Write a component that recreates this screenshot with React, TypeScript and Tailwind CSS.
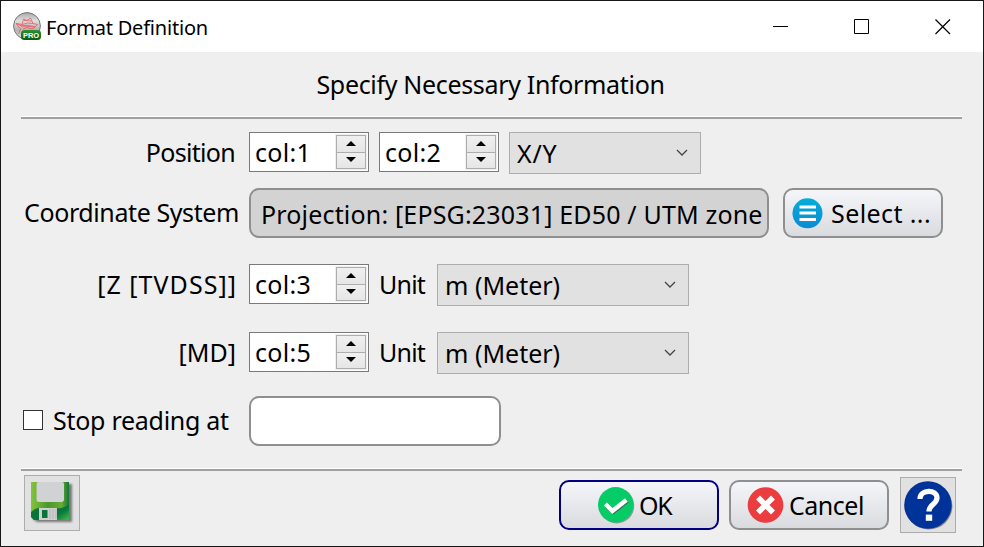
import type { ReactNode } from "react";

function Rule() {
  return (
    <div className="mr-[21px] ml-5 h-[3px] shrink-0 border-t border-white bg-[#a0a0a0]" />
  );
}

function Label({ children, className = "" }: { children: ReactNode; className?: string }) {
  return (
    <span className={`block leading-[34px] whitespace-pre ${className}`}>{children}</span>
  );
}

function SpinBox({ value }: { value: string }) {
  return (
    <div className="flex h-10 w-[120px] shrink-0 justify-between border border-[#7a7a7a] bg-white pl-[5px]">
      <Label className="mt-[2px] tracking-[0.3px]">{value}</Label>
      <div className="my-px mr-px flex w-8 flex-col border border-[#f0f0f0]">
        <div className="flex h-[18px] items-center justify-center border border-[#adadad] bg-gradient-to-b from-[#f0f0f0] to-[#e6e6e6]">
          <svg width="10" height="5" viewBox="0 0 10 5" className="-mt-[2px] -ml-px">
            <path d="M5 0L10 5H0Z" fill="#000" />
          </svg>
        </div>
        <div className="flex h-[16px] items-center justify-center border border-t-0 border-[#adadad] bg-gradient-to-b from-[#f0f0f0] to-[#e6e6e6]">
          <svg width="10" height="5" viewBox="0 0 10 5" className="-mt-[3px] -ml-px">
            <path d="M0 0H10L5 5Z" fill="#000" />
          </svg>
        </div>
      </div>
    </div>
  );
}

function Combo({ value, className }: { value: string; className: string }) {
  return (
    <div className={`flex h-[42px] shrink-0 justify-between border border-[#adadad] bg-[#e1e1e1] pr-3 pl-[7px] ${className}`}>
      <Label className="mt-[3px]">{value}</Label>
      <svg width="12" height="8" viewBox="0 0 12 8" className="mt-4" fill="none" stroke="#444" strokeWidth="1.3">
        <path d="M1 1L6 6L11 1" />
      </svg>
    </div>
  );
}

function PushButton({ icon, children, className = "" }: { icon: ReactNode; children: ReactNode; className?: string }) {
  return (
    <button className={`flex h-[50px] w-40 shrink-0 items-center rounded-[10px] border-2 bg-gradient-to-b from-[#f5f6fa] to-[#dadbde] ${className}`}>
      {icon}
      {children}
    </button>
  );
}

function AppIcon() {
  return (
    <svg width="29" height="29" viewBox="0 0 29 29" className="shrink-0">
      <defs>
        <linearGradient id="orb" x1="0" y1="0" x2="0" y2="1">
          <stop offset="0" stopColor="#a8a8a8" />
          <stop offset="0.3" stopColor="#dedede" />
          <stop offset="0.65" stopColor="#b4b4b4" />
          <stop offset="1" stopColor="#e4e4e4" />
        </linearGradient>
        <linearGradient id="pro" x1="0" y1="0" x2="0" y2="1">
          <stop offset="0" stopColor="#2d9135" />
          <stop offset="1" stopColor="#075c16" />
        </linearGradient>
      </defs>
      <circle cx="14" cy="14" r="13.4" fill="url(#orb)" stroke="#777" strokeWidth="1" />
      <g fill="none" stroke="#ec5a5e" strokeWidth="0.8">
        <path d="M3 11.5L9 12.5L10.5 7L14 8.5L17.5 6L20 11.5L24.5 12.5L22 15L9 14L3 11.5L7.5 17L5.5 22" />
        <path d="M9 12.5Q15 10 20 11.5M8 14Q15 12 22 15M10 17L14 15.5L19 17L22 15.5M11 8.5L18.5 9" />
      </g>
      <rect x="8" y="18" width="20" height="10" rx="3.5" fill="url(#pro)" />
      <text x="18.1" y="25.6" textAnchor="middle" fontFamily="Liberation Sans" fontWeight="700" fontSize="7.5" fill="#fff" textLength="16">PRO</text>
    </svg>
  );
}

function ListIcon() {
  return (
    <svg width="32" height="32" viewBox="0 0 32 32" className="shrink-0">
      <defs>
        <linearGradient id="list" x1="0" y1="0" x2="0" y2="1">
          <stop offset="0" stopColor="#05add9" />
          <stop offset="1" stopColor="#0a8bd4" />
        </linearGradient>
      </defs>
      <circle cx="16.5" cy="16.3" r="15" fill="url(#list)" />
      <path d="M8.5 10H25M8.5 16H25M8.5 22.5H25" stroke="#fff" strokeWidth="3" />
    </svg>
  );
}

function CheckIcon() {
  return (
    <svg width="38" height="38" viewBox="0 0 38 38" className="shrink-0">
      <circle cx="19.7" cy="19.8" r="17.6" fill="#999" />
      <circle cx="18.7" cy="18.8" r="17.7" fill="#05cc66" />
      <path d="M9.4 20L16.4 26L30.4 15" fill="none" stroke="#3c6b50" strokeWidth="4" />
      <path d="M8.4 18L15.4 25L29.4 14" fill="none" stroke="#fff" strokeWidth="4.4" />
    </svg>
  );
}

function CrossIcon() {
  return (
    <svg width="38" height="38" viewBox="0 0 38 38" className="shrink-0">
      <circle cx="18.5" cy="19" r="17.8" fill="#eb3c3f" />
      <path d="M11 11.5L26 26.5M26 11.5L11 26.5" fill="none" stroke="#fff" strokeWidth="5.6" />
    </svg>
  );
}

function HelpIcon() {
  return (
    <svg width="50" height="50" viewBox="0 0 50 50">
      <circle cx="25.8" cy="26" r="23.6" fill="#888" />
      <circle cx="24.9" cy="25" r="23.7" fill="#003399" />
      <path d="M17 19C17 9 34 9 34 17.8C34 24.5 26 24 26 31.5" fill="none" stroke="#fff" strokeWidth="5.2" />
      <rect x="22.8" y="34.6" width="6.4" height="6.2" fill="#fff" />
    </svg>
  );
}

function SaveIcon() {
  return (
    <svg width="44" height="44" viewBox="0 0 44 44" className="-mt-[2px]">
      <defs>
        <linearGradient id="disk" x1="0" y1="0" x2="1" y2="0">
          <stop offset="0" stopColor="#84c43c" />
          <stop offset="0.45" stopColor="#4b962d" />
          <stop offset="0.8" stopColor="#66ad32" />
          <stop offset="1" stopColor="#147537" />
        </linearGradient>
        <linearGradient id="base" x1="0" y1="0" x2="1" y2="1">
          <stop offset="0" stopColor="#4fa334" />
          <stop offset="0.4" stopColor="#087239" />
          <stop offset="0.75" stopColor="#08783b" />
          <stop offset="1" stopColor="#42be4b" />
        </linearGradient>
        <filter id="soft" x="-20%" y="-20%" width="140%" height="140%">
          <feGaussianBlur stdDeviation="1" />
        </filter>
      </defs>
      <path d="M3 4H42V42H7L3 39Z" fill="#777" filter="url(#soft)" />
      <path d="M1 2H39V40H4L1 37Z" fill="url(#disk)" />
      <path d="M1 29Q6 22 16 23Q29 23 36 15L39 28V40H4L1 37Z" fill="url(#base)" />
      <path d="M6 22H34V16L39 11V24Q34 29 26 28H9Q5 28 1 32V28Q2 24 6 22Z" fill="url(#disk)" />
      <rect x="6.5" y="2" width="27.5" height="20" rx="2" fill="#d1d2d4" />
      <rect x="9" y="28" width="18" height="12" fill="#ced0d0" />
      <rect x="12" y="30" width="5.5" height="8" fill="#08743a" />
      <path d="M20 29V39M23 29V39M26 29V39" stroke="#aab0ad" strokeWidth="0.8" />
    </svg>
  );
}

export default function App() {
  return (
    <div className="flex h-[547px] w-[984px] flex-col overflow-hidden border border-[#171717] bg-[#efefef] font-['Noto_Sans',sans-serif] text-[25px] text-black">
      <header className="flex h-[51px] shrink-0 items-center bg-white pl-3">
        <AppIcon />
        <span className="ml-1 pt-[2px] text-[20px] tracking-[-0.2px] whitespace-pre">Format Definition</span>
        <div className="mr-[32px] ml-auto flex items-center gap-[65px]">
          <svg width="16" height="16" viewBox="0 0 16 16" className="-ml-px"><path d="M0 7.5H15" stroke="#000" /></svg>
          <svg width="16" height="16" viewBox="0 0 16 16"><path d="M0.5 0.5H14.5V14.5H0.5Z" fill="none" stroke="#000" /></svg>
          <svg width="16" height="16" viewBox="0 0 16 16"><path d="M0.5 0.5L15 15M15 0.5L0.5 15" stroke="#000" strokeWidth="1.2" /></svg>
        </div>
      </header>

      <div className="flex h-16 shrink-0 justify-center pt-[15px] pr-[3px]">
        <Label className="tracking-[-0.33px]">Specify Necessary Information</Label>
      </div>
      <Rule />

      <main className="flex h-[349px] shrink-0 flex-col pt-[13px]">
        <div className="flex h-14">
          <div className="mr-[14px] flex w-[234px] justify-end pt-[3px]">
            <Label className="tracking-[-0.7px]">Position</Label>
          </div>
          <SpinBox value="col:1" />
          <div className="w-[10px]" />
          <SpinBox value="col:2" />
          <div className="w-[10px]" />
          <Combo value="X/Y" className="w-48 tracking-[0.8px]" />
        </div>
        <div className="flex h-[76px]">
          <div className="mr-[10px] flex w-[238px] justify-end pt-[7px]">
            <Label className="tracking-[-0.4px]">Coordinate System</Label>
          </div>
          <div className="h-[50px] w-[520px] shrink-0 rounded-[10px] border-2 border-[#8f8f8f] bg-[#d3d3d3] pt-[7px] pl-[10px]">
            <Label className="tracking-[0.17px]">Projection: [EPSG:23031] ED50 / UTM zone</Label>
          </div>
          <PushButton icon={<ListIcon />} className="ml-[14px] border-[#8f8f8f] pl-[6px]">
            <Label className="ml-[8px] tracking-[0.4px]">Select ...</Label>
          </PushButton>
        </div>
        <div className="flex h-[68px]">
          <div className="mr-[12px] flex w-[236px] justify-end pt-[3px]">
            <Label className="tracking-[1.05px]">[Z [TVDSS]]</Label>
          </div>
          <SpinBox value="col:3" />
          <Label className="w-[68px] pt-[3px] pl-[10px] tracking-[-0.8px]">Unit</Label>
          <Combo value="m (Meter)" className="w-[252px]" />
        </div>
        <div className="flex h-16">
          <div className="mr-[13px] flex w-[235px] justify-end pt-[3px]">
            <Label>[MD]</Label>
          </div>
          <SpinBox value="col:5" />
          <Label className="w-[68px] pt-[3px] pl-[10px] tracking-[-0.8px]">Unit</Label>
          <Combo value="m (Meter)" className="w-[252px]" />
        </div>
        <div className="flex">
          <div className="flex w-[248px] pl-[22px]">
            <div className="mt-[14px] size-5 border border-[#333] bg-white" />
            <Label className="mt-[7px] ml-[10px] tracking-[-0.27px]">Stop reading at</Label>
          </div>
          <div className="h-[50px] w-[252px] rounded-[10px] border-2 border-[#8f8f8f] bg-white" />
        </div>
      </main>
      <Rule />

      <footer className="flex pr-[27px] pl-[23px]">
        <div className="mt-1 flex size-14 items-center justify-center border border-[#adadad] bg-[#e1e1e1]">
          <SaveIcon />
        </div>
        <PushButton icon={<CheckIcon />} className="mt-[9px] ml-auto border-[#000080] pl-[36px]">
          <Label className="ml-[4px] tracking-[-1.2px]">OK</Label>
        </PushButton>
        <PushButton icon={<CrossIcon />} className="mt-[9px] ml-[10px] border-[#8f8f8f] pl-[16px]">
          <Label className="ml-[4px] tracking-[-0.5px]">Cancel</Label>
        </PushButton>
        <div className="mt-[6px] ml-[11px] flex size-14 items-center justify-center border border-[#adadad] bg-[#e1e1e1]">
          <HelpIcon />
        </div>
      </footer>
    </div>
  );
}
